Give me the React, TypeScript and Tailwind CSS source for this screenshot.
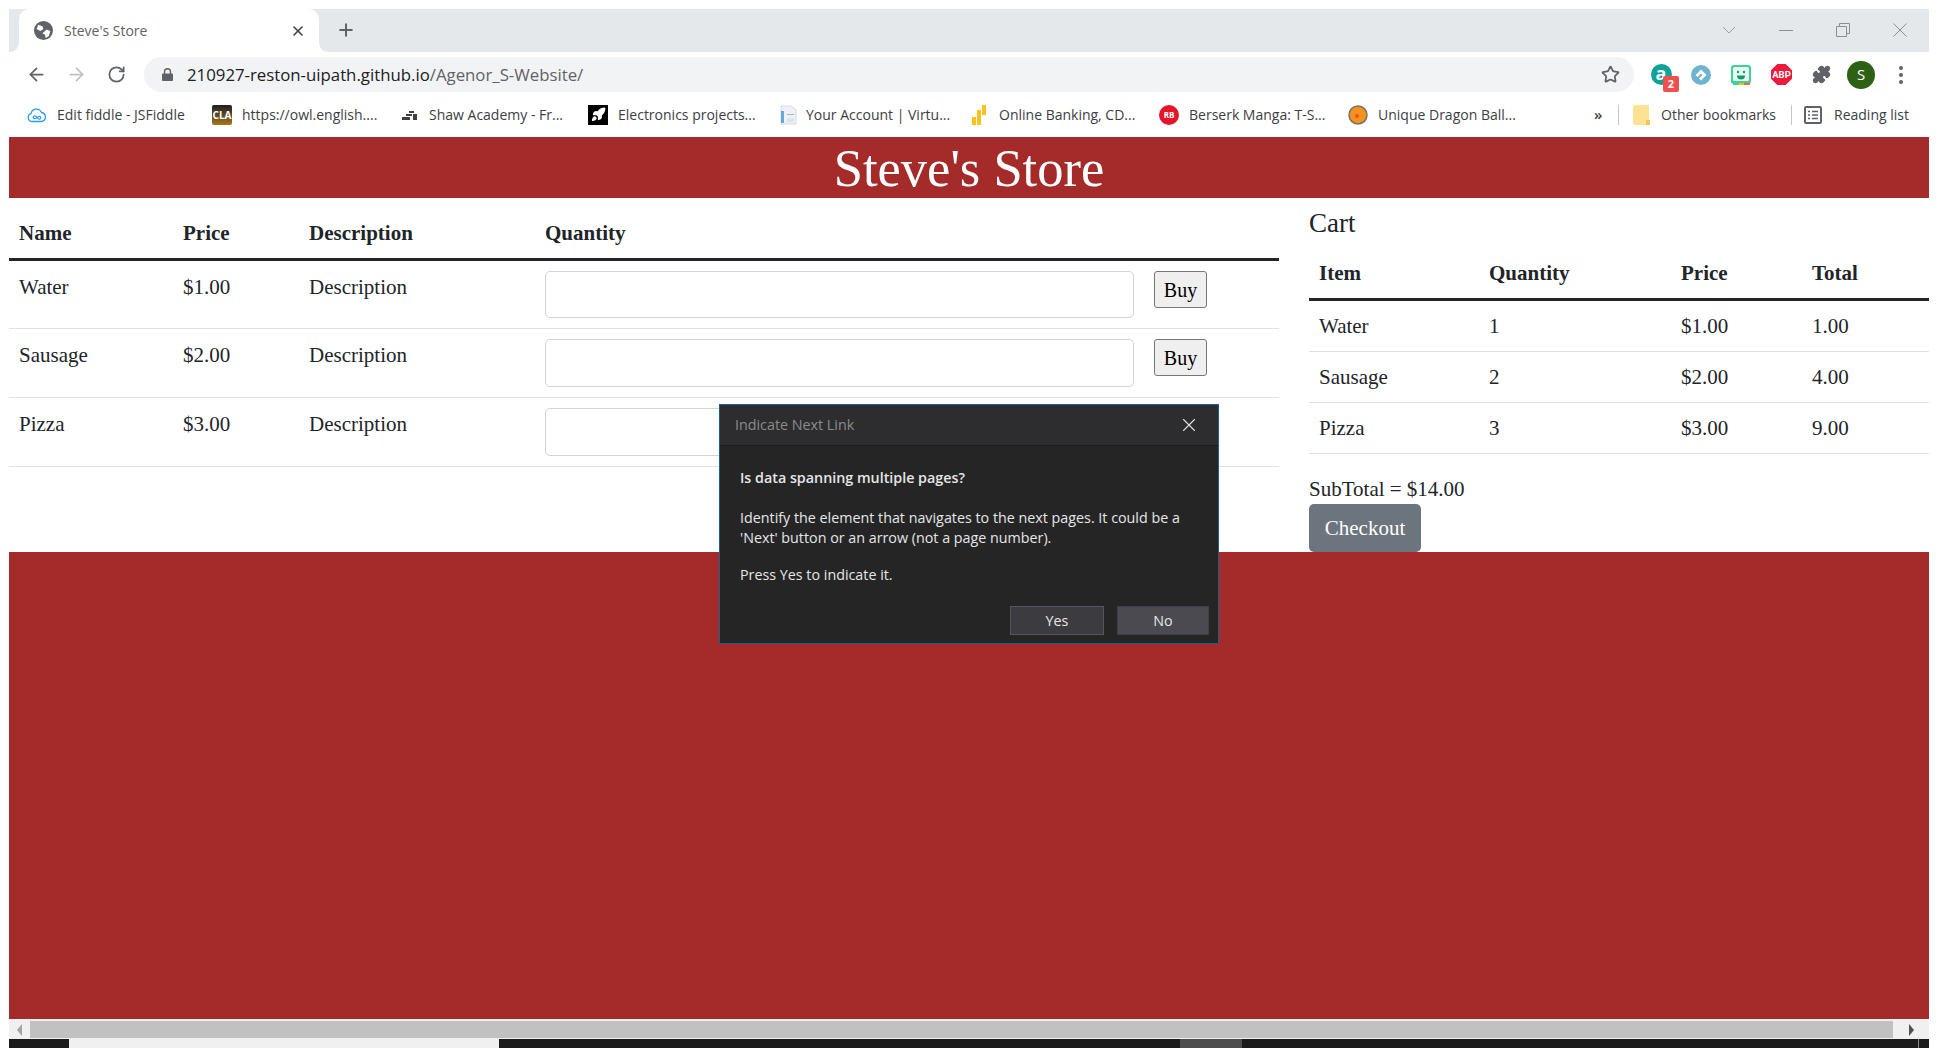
import { ArrowLeft, ArrowRight, Puzzle, Rocket, RotateCw, Star, X, Plus } from "lucide-react";
import type { ReactNode } from "react";

const products = [
  { name: "Water", price: "$1.00" },
  { name: "Sausage", price: "$2.00" },
  { name: "Pizza", price: "$3.00" },
];

const cart = [
  { item: "Water", qty: 1, price: "$1.00", total: "1.00" },
  { item: "Sausage", qty: 2, price: "$2.00", total: "4.00" },
  { item: "Pizza", qty: 3, price: "$3.00", total: "9.00" },
];

function Bookmark({ icon, label, width }: { icon: ReactNode; label: string; width: string }) {
  return (
    <div className={`flex items-center shrink-0 ${width}`}>
      <div className="w-[30px] shrink-0 flex items-center">{icon}</div>
      <span className="whitespace-nowrap">{label}</span>
    </div>
  );
}

function Browser() {
  return (
    <div className="shrink-0 font-['Open_Sans',sans-serif] text-[#3c4043]">
      {/* Tabs */}
      <div className="flex h-[43px]">
        <div className="w-[10px] bg-[#e5e8eb] rounded-br-[9px]" />
        <div className="w-[300px] bg-[#e5e8eb]">
          <div className="h-full bg-white rounded-t-[10px] flex items-center pl-[15px] pr-[13px]">
            <svg viewBox="0 0 18 18" className="w-[19px] h-[19px]">
              <circle cx="9" cy="9" r="9" fill="#5f6368" />
              <path d="M4 3.500l4 1.500 1 2.500-3 2-3.500-2zM12 8l3.500 1.500-1.500 5-3 1.500-.5-3-2.500-1.500z" fill="#fff" />
            </svg>
            <span className="ml-[11px] text-[14px] text-[#5f6368] flex-1">Steve's Store</span>
            <X className="w-[16px] h-[16px] text-[#3c4043]" strokeWidth={2.4} />
          </div>
        </div>
        <div className="flex-1 bg-[#e5e8eb] rounded-bl-[9px] flex items-center pb-[1px]">
          <Plus className="ml-[17px] w-[20px] h-[20px] text-[#5f6368]" strokeWidth={2.4} />
          <div className="flex-1" />
          <svg viewBox="0 0 14 8" className="w-[14px] h-[8px] mr-[43px]" fill="none" stroke="#9aa0a6">
            <path d="M1 1l6 6 6-6" />
          </svg>
          <div className="w-[14px] h-px bg-[#8a8f94] mr-[43px]" />
          <svg viewBox="0 0 14 14" className="w-[14px] h-[14px] mr-[43px]" fill="none" stroke="#8a8f94">
            <path d="M.5 3.500h10v10H.5zM3.500 3.500v-3h10v10h-3" />
          </svg>
          <svg viewBox="0 0 14 14" className="w-[14px] h-[14px] mr-[22px]" fill="none" stroke="#8a8f94">
            <path d="M.5.5l13 13M13.500.5l-13 13" />
          </svg>
        </div>
      </div>

      {/* Toolbar */}
      <div className="flex items-center h-[45px] pl-[7px] bg-white">
        <div className="w-[40px] flex justify-center">
          <ArrowLeft className="w-[21px] h-[21px] text-[#5f6368]" />
        </div>
        <div className="w-[40px] flex justify-center">
          <ArrowRight className="w-[21px] h-[21px] text-[#bdc1c6]" />
        </div>
        <div className="w-[40px] flex justify-center">
          <RotateCw className="w-[19px] h-[19px] text-[#5f6368]" strokeWidth={2.2} />
        </div>
        <div className="ml-[8px] w-[1490px] h-[35px] rounded-full bg-[#f1f3f4] flex items-center pl-[18px] pr-[14px]">
          <svg viewBox="0 0 12 14" className="w-[11px] h-[13px] text-[#5f6368]" fill="currentColor">
            <path d="M2 6V4a4 4 0 018 0v2h1a1 1 0 011 1v6a1 1 0 01-1 1H1a1 1 0 01-1-1V7a1 1 0 011-1zm1.500 0h5V4a2.500 2.500 0 00-5 0z" />
          </svg>
          <span className="ml-[14px] text-[16.8px] whitespace-nowrap text-[#202124]">
            210927-reston-uipath.github.io<span className="text-[#5f6368]">/Agenor_S-Website/</span>
          </span>
          <div className="flex-1" />
          <Star className="w-[19px] h-[19px] text-[#5f6368]" strokeWidth={2.2} />
        </div>
        <div className="ml-[7px] flex items-center">
          <div className="relative w-[40px] flex justify-center">
            <div className="w-[21px] h-[21px] rounded-full bg-[#0fa398] text-white flex items-center justify-center text-[18px] font-bold leading-none pb-[3px]">
              a
            </div>
            <div className="absolute left-[22px] top-[12px] w-[16px] h-[16px] rounded-[2px] bg-[#f04f4f] text-white text-[11px] font-bold leading-[16px] text-center">
              2
            </div>
          </div>
          <div className="w-[40px] flex justify-center">
            <svg viewBox="0 0 20 20" className="w-[20px] h-[20px]">
              <circle cx="10" cy="10" r="10" fill="#6fb4cf" />
              <path d="M10 4.500L15.500 10 10 15.500l-2-2 3.500-3.500L10 8.500 6.500 12l-2-2z" fill="#fff" />
            </svg>
          </div>
          <div className="w-[40px] flex justify-center">
            <svg viewBox="0 0 20 20" className="w-[20px] h-[20px]">
              <rect width="20" height="19" rx="3" fill="#3ecf9a" />
              <rect x="2" y="2" width="16" height="14" rx="1.500" fill="#e6fbf3" />
              <circle cx="7" cy="7" r="1.200" fill="#129a6a" />
              <circle cx="13" cy="7" r="1.200" fill="#129a6a" />
              <path d="M6 10.500h8a4 4 0 01-8 0z" fill="#129a6a" />
              <rect x="2" y="18" width="6" height="2" fill="#3ecf9a" />
              <rect x="8" y="18" width="5" height="2" fill="#f4c20d" />
              <rect x="13" y="18" width="6" height="2" fill="#ea6a3a" />
            </svg>
          </div>
          <div className="w-[40px] flex justify-center">
            <svg viewBox="0 0 20 20" className="w-[21px] h-[21px]">
              <path d="M6 0h8l6 6v8l-6 6H6l-6-6V6z" fill="#ec1b3b" />
              <text x="10" y="13.500" textAnchor="middle" fontSize="9" fontWeight="700" fill="#fff" fontFamily="Roboto">
                ABP
              </text>
            </svg>
          </div>
          <div className="w-[40px] flex justify-center">
            <Puzzle className="w-[19px] h-[19px] text-[#5f6368]" fill="currentColor" />
          </div>
          <div className="w-[40px] flex justify-center">
            <div className="w-[28px] h-[28px] rounded-full bg-[#2d6216] text-white text-[15px] flex items-center justify-center">
              S
            </div>
          </div>
          <div className="w-[40px] flex flex-col items-center gap-[3px]">
            <div className="w-[4px] h-[4px] rounded-full bg-[#5f6368]" />
            <div className="w-[4px] h-[4px] rounded-full bg-[#5f6368]" />
            <div className="w-[4px] h-[4px] rounded-full bg-[#5f6368]" />
          </div>
        </div>
      </div>

      {/* Bookmarks */}
      <div className="flex items-center h-[40px] pl-[18px] pb-[5px] text-[14px] bg-white">
        <Bookmark
          width="w-[185px]"
          label="Edit fiddle - JSFiddle"
          icon={
            <svg viewBox="0 0 20 16" className="w-[20px] h-[16px]" fill="none" stroke="#2f9be8" strokeWidth="1.300">
              <path d="M5 14.500a4 4 0 01-1-7.800 5.500 5.500 0 0110.500-1.200 4.600 4.600 0 01.5 9z" />
              <path d="M10 10.500c-1-1.500-2-2-3-1.500s-1 2 0 2.500 2-.5 3-1 2-1.500 3-1 1 2 0 2.500-2 0-3-1.500z" />
            </svg>
          }
        />
        <Bookmark
          width="w-[187px]"
          label="https://owl.english...."
          icon={
            <div className="w-[20px] h-[20px] rounded-[2px] bg-gradient-to-b from-[#1f1f1f] to-[#a8770f] text-white text-[10px] font-bold leading-[20px] text-center">
              CLA
            </div>
          }
        />
        <Bookmark
          width="w-[189px]"
          label="Shaw Academy - Fr..."
          icon={
            <svg viewBox="0 0 15 10" className="ml-[3px] w-[15px] h-[10px]" fill="#3c4043">
              <path d="M0 7h8v3H0zM4 4h6v2H4zM7 1h5v2H7zM11 4h4v6h-4z" />
            </svg>
          }
        />
        <Bookmark
          width="w-[188px]"
          label="Electronics projects..."
          icon={
            <div className="w-[20px] h-[20px] bg-black flex items-center justify-center">
              <Rocket className="w-[15px] h-[15px] text-white" fill="white" />
            </div>
          }
        />
        <Bookmark
          width="w-[193px]"
          label="Your Account | Virtu..."
          icon={
            <svg viewBox="0 0 19 20" className="ml-[3px] w-[19px] h-[20px]">
              <path d="M2 1h10l5 4v14H2z" fill="#eef1f5" stroke="#d5dbe3" />
              <rect x="2" y="6" width="3" height="12" fill="#6aa5d8" />
              <rect x="8" y="9" width="7" height="1" fill="#aab2bd" />
              <rect x="8" y="13" width="7" height="4" fill="#dfe4ea" />
            </svg>
          }
        />
        <Bookmark
          width="w-[190px]"
          label="Online Banking, CD..."
          icon={
            <svg viewBox="0 0 14 20" className="ml-[3px] w-[14px] h-[20px]" fill="#fcc419">
              <path d="M0 12h4v8H0zM5 5h4v15H5zM10 0h4v10h-4z" />
            </svg>
          }
        />
        <Bookmark
          width="w-[189px]"
          label="Berserk Manga: T-S..."
          icon={
            <div className="w-[20px] h-[20px] rounded-full bg-[#e5142a] text-white text-[8px] font-bold leading-[20px] text-center">
              RB
            </div>
          }
        />
        <Bookmark
          width="w-[246px]"
          label="Unique Dragon Ball..."
          icon={
            <svg viewBox="0 0 20 20" className="w-[20px] h-[20px]">
              <circle cx="10" cy="10" r="9" fill="#f4921e" stroke="#77736a" strokeWidth="1.500" />
              <circle cx="9" cy="11" r="2" fill="#e9541a" />
            </svg>
          }
        />
        <span className="w-[24px] shrink-0 text-[15px] font-semibold">»</span>
        <div className="w-px h-[20px] bg-[#c4c7ca]" />
        <svg viewBox="0 0 17 20" className="ml-[14px] w-[17px] h-[20px]">
          <path d="M1.500 0h13A1.500 1.500 0 0116 1.500V20H1.500A1.500 1.500 0 010 18.500v-17A1.500 1.500 0 011.500 0z" fill="#fde293" />
          <path d="M13 15h4v5h-4z" fill="#f2c94c" />
        </svg>
        <span className="ml-[11px] w-[130px] shrink-0 whitespace-nowrap">Other bookmarks</span>
        <div className="w-px h-[20px] bg-[#c4c7ca]" />
        <svg viewBox="0 0 18 18" className="ml-[12px] w-[18px] h-[18px]" fill="none" stroke="#5f6368" strokeWidth="2">
          <rect x="1" y="1" width="16" height="16" rx="1" />
          <path d="M4 5.500h2M8 5.500h6M4 9h2M8 9h6M4 12.500h2M8 12.500h6" strokeWidth="1.500" />
        </svg>
        <span className="ml-[12px] whitespace-nowrap">Reading list</span>
      </div>
    </div>
  );
}

function Store() {
  return (
    <div className="flex h-[354px] shrink-0 text-[21px] leading-[24px] text-[#212529] font-['Liberation_Serif',serif]">
      <div className="w-[1270px] shrink-0">
        <table className="w-full table-fixed border-collapse text-left">
          <thead>
            <tr className="border-b-[3px] border-[#212529]">
              <th className="w-[164px] pl-[10px] pt-[23px] pb-[13px] font-bold">Name</th>
              <th className="w-[126px] pl-[10px] pt-[23px] pb-[13px] font-bold">Price</th>
              <th className="w-[236px] pl-[10px] pt-[23px] pb-[13px] font-bold">Description</th>
              <th className="pl-[10px] pt-[23px] pb-[13px] font-bold">Quantity</th>
            </tr>
          </thead>
          <tbody>
            {products.map((p, i) => (
              <tr key={p.name} className="border-b border-[#dee2e6] align-top">
                <td className="pl-[10px] pt-[14px]">{p.name}</td>
                <td className="pl-[10px] pt-[14px]">{p.price}</td>
                <td className="pl-[10px] pt-[14px]">Description</td>
                <td className="pl-[10px] py-[10px]">
                  <div className="flex items-start">
                    <input
                      className={`w-[589px] bg-white border border-[#ced4da] rounded-[5px] ${i === 0 ? "h-[47px]" : "h-[48px]"}`}
                    />
                    <button className="ml-[20px] w-[53px] h-[37px] bg-[#efefef] border border-[#767676] rounded-[3px] text-[20px] text-black">
                      Buy
                    </button>
                  </div>
                </td>
              </tr>
            ))}
          </tbody>
        </table>
      </div>
      <div className="ml-[30px] w-[620px] shrink-0">
        <h2 className="mt-[9px] text-[27px] leading-[32px]">Cart</h2>
        <table className="w-full table-fixed border-collapse text-left">
          <thead>
            <tr className="border-b-[3px] border-[#212529]">
              <th className="w-[170px] pl-[10px] pt-[22px] pb-[13px] font-bold">Item</th>
              <th className="w-[192px] pl-[10px] pt-[22px] pb-[13px] font-bold">Quantity</th>
              <th className="w-[131px] pl-[10px] pt-[22px] pb-[13px] font-bold">Price</th>
              <th className="pl-[10px] pt-[22px] pb-[13px] font-bold">Total</th>
            </tr>
          </thead>
          <tbody>
            {cart.map((c) => (
              <tr key={c.item} className="border-b border-[#dee2e6]">
                <td className="pl-[10px] pt-[13px] pb-[13px]">{c.item}</td>
                <td className="pl-[10px] pt-[13px] pb-[13px]">{c.qty}</td>
                <td className="pl-[10px] pt-[13px] pb-[13px]">{c.price}</td>
                <td className="pl-[10px] pt-[13px] pb-[13px]">{c.total}</td>
              </tr>
            ))}
          </tbody>
        </table>
        <p className="mt-[23px]">SubTotal = $14.00</p>
        <button className="block mt-[3px] w-[112px] h-[48px] rounded-[5px] bg-[#6c757d] text-white">Checkout</button>
      </div>
    </div>
  );
}

function NextLinkDialog() {
  return (
    <div className="absolute left-[719px] top-[404px] w-[500px] h-[240px] bg-[#252526] border border-[#1a5f96] text-[14.3px] leading-[20px] text-[#e6e6e6] font-['Open_Sans',sans-serif]">
      <div className="h-[41px] bg-[#2d2d30] border-b border-[#1c1c1c] flex items-center justify-between pl-[15px] pr-[18px]">
        <span className="text-[#8b8b8b]">Indicate Next Link</span>
        <X className="w-[22px] h-[22px] text-[#e0e0e0]" strokeWidth={1.2} />
      </div>
      <div className="px-[20px] pt-[22px]">
        <p className="font-semibold">Is data spanning multiple pages?</p>
        <p className="mt-[20px]">
          Identify the element that navigates to the next pages. It could be a
          <br />
          'Next' button or an arrow (not a page number).
        </p>
        <p className="mt-[17px]">Press Yes to indicate it.</p>
      </div>
      <div className="mt-[21px] flex justify-end gap-[13px] pr-[9px]">
        <button className="w-[94px] h-[29px] bg-[#3c3c40] border border-[#55555a]">Yes</button>
        <button className="w-[92px] h-[29px] bg-[#4a4a50] border border-[#3f3f44]">No</button>
      </div>
    </div>
  );
}

export default function App() {
  return (
    <div className="relative w-[1938px] h-[1048px] overflow-hidden bg-white pt-[9px] px-[9px] flex flex-col">
      <Browser />
      <header className="h-[61px] shrink-0 bg-[#a52a2a] text-white text-center text-[52.5px] leading-[62px] font-['Liberation_Serif',serif]">
        Steve's Store
      </header>
      <Store />
      <footer className="flex-1 bg-[#a52a2a]" />

      {/* Horizontal scrollbar */}
      <div className="shrink-0 h-[2px] bg-[#f0f0f0]" />
      <div className="shrink-0 h-[17px] bg-[#f0f0f0] flex items-center">
        <div className="w-[21px] flex justify-center">
          <div className="border-y-[6px] border-y-transparent border-r-[5px] border-r-[#a3a3a3]" />
        </div>
        <div className="w-[1863px] h-full bg-[#c1c1c1]" />
        <div className="flex-1 flex justify-center">
          <div className="border-y-[6px] border-y-transparent border-l-[5px] border-l-[#505050]" />
        </div>
      </div>
      <div className="shrink-0 h-px bg-[#f0f0f0]" />

      {/* Taskbar, mostly cut off at the bottom of the window */}
      <div className="shrink-0 h-[9px] overflow-hidden bg-[#1b1b1b] flex">
        <div className="ml-[60px] w-[430px] bg-[#f0f0f0]" />
        <div className="ml-[681px] w-[62px] bg-[#4d4d4d]" />
        <span className="ml-[553px] mt-[7px] text-white text-[13px] leading-none whitespace-nowrap font-['Roboto',sans-serif]">
          3:42 AM
        </span>
        <div className="ml-[75px] w-px bg-[#8a8a8a]" />
      </div>

      <NextLinkDialog />
    </div>
  );
}
